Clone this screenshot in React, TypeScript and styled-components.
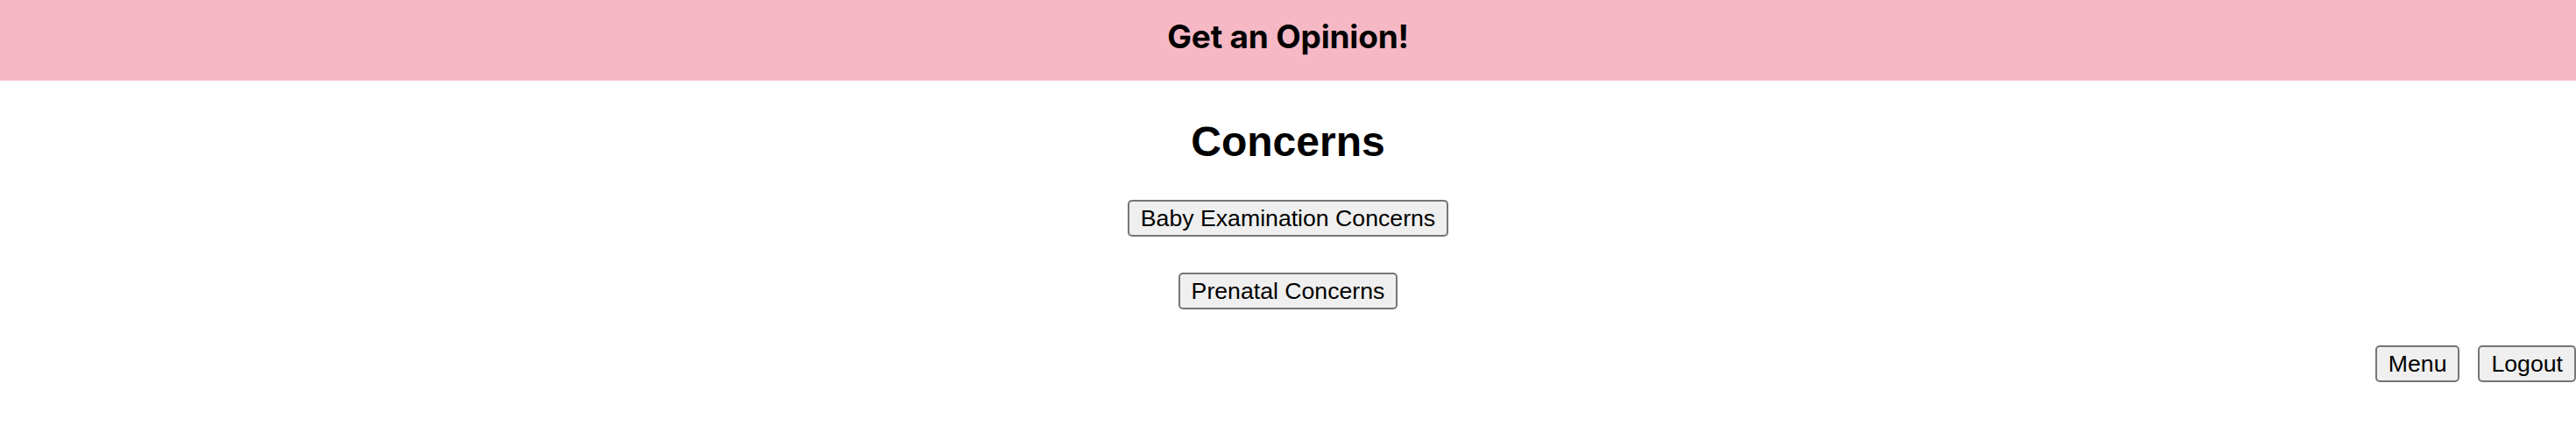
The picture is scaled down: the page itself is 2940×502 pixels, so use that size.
import React from "react";
import styled, { createGlobalStyle } from "styled-components";

const GlobalStyle = createGlobalStyle`
  html, body {
    margin: 0;
    padding: 0;
    background: #ffffff;
  }
  body {
    font-family: "Liberation Sans", Arial, sans-serif;
    color: #000000;
  }
`;

const Page = styled.div`
  display: flex;
  flex-direction: column;
  width: 100%;
`;

const Header = styled.header`
  display: flex;
  justify-content: center;
  align-items: flex-start;
  height: 92px;
  box-sizing: border-box;
  padding-top: 19px;
  background: #f5b8c4;
`;

const Title = styled.h1`
  margin: 0;
  font-family: Inter, "Noto Sans", sans-serif;
  font-weight: 700;
  font-size: 37px;
  line-height: normal;
  letter-spacing: -0.2px;
`;

const Main = styled.main`
  display: flex;
  flex-direction: column;
  align-items: center;
  padding-top: 42px;
`;

const Heading = styled.h2`
  margin: 0 0 39px 0;
  font-family: "Liberation Sans", Arial, sans-serif;
  font-weight: 700;
  font-size: 48px;
  line-height: normal;
`;

const Choices = styled.div`
  display: flex;
  flex-direction: column;
  align-items: center;
  gap: 41px;
`;

const Button = styled.button`
  box-sizing: border-box;
  height: 42px;
  padding: 0 13px;
  border: 2px solid #767676;
  border-radius: 5px;
  background: #efefef;
  color: #000000;
  font-family: "Liberation Sans", Arial, sans-serif;
  font-size: 26.67px;
  line-height: 1;
  cursor: pointer;
`;

const NavRow = styled.nav`
  display: flex;
  justify-content: flex-end;
  gap: 21px;
  margin-top: 41px;
`;

export default function App() {
  return (
    <>
      <GlobalStyle />
      <Page>
        <Header>
          <Title>Get an Opinion!</Title>
        </Header>
        <Main>
          <Heading>Concerns</Heading>
          <Choices>
            <Button>Baby Examination Concerns</Button>
            <Button>Prenatal Concerns</Button>
          </Choices>
        </Main>
        <NavRow>
          <Button>Menu</Button>
          <Button>Logout</Button>
        </NavRow>
      </Page>
    </>
  );
}
